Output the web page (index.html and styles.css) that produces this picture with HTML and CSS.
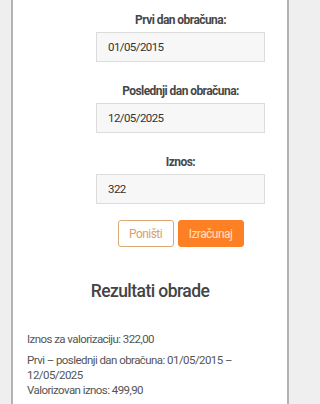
FILE: index.html
```html
<!DOCTYPE html>
<html lang="sr">
<head>
<meta charset="utf-8">
<meta name="viewport" content="width=300">
<link rel="stylesheet" href="styles.css">
</head>
<body>
<div class="card">
  <form class="form">
    <div class="group">
      <label class="label">Prvi dan obračuna:</label>
      <div class="input">01/05/2015</div>
    </div>
    <div class="group">
      <label class="label">Poslednji dan obračuna:</label>
      <div class="input">12/05/2025</div>
    </div>
    <div class="group">
      <label class="label">Iznos:</label>
      <div class="input">322</div>
    </div>
    <div class="actions">
      <button type="button" class="btn btn-outline">Poništi</button>
      <button type="button" class="btn btn-primary">Izračunaj</button>
    </div>
  </form>
  <h2 class="title">Rezultati obrade</h2>
  <div class="results">
    <p class="line">Iznos za valorizaciju: 322,00</p>
    <p class="line">Prvi – poslednji dan obračuna: 01/05/2015 – 12/05/2025</p>
    <p class="line tight">Valorizovan iznos: 499,90</p>
  </div>
</div>
</body>
</html>
```
FILE: styles.css
```css
html, body {
  margin: 0;
  padding: 0;
  background: #efefef;
  font-family: Roboto, "Liberation Sans", sans-serif;
  color: #444;
  height: 404px;
  overflow: hidden;
  letter-spacing: -0.035em;
}
body {
  width: 300px;
}
.card {
  margin-left: 11px;
  width: 278px;
  background: #fff;
  border-left: 2px solid #b3b3b3;
  border-right: 2px solid #b3b3b3;
  height: 404px;
  box-sizing: border-box;
  padding-top: 13px;
}
.form {
  margin: 0 22px 0 83px;
  display: flex;
  flex-direction: column;
  gap: 22px;
}
.group {
  display: flex;
  flex-direction: column;
  align-items: stretch;
}
.label {
  text-align: center;
  font-weight: 700;
  font-size: 12px;
  color: #474747;
  line-height: 14px;
  margin-bottom: 5px;
}
.input {
  height: 30px;
  box-sizing: border-box;
  background: #f7f7f7;
  border: 1px solid #dcdcdc;
  padding: 0 11px;
  display: flex;
  align-items: center;
  font-size: 11.5px;
  letter-spacing: -0.05em;
  color: #333;
}
.actions {
  display: flex;
  justify-content: center;
  gap: 4px;
  margin-top: -6px;
}
.btn {
  height: 27px;
  box-sizing: border-box;
  border-radius: 3px;
  font-family: inherit;
  letter-spacing: inherit;
  font-size: 12px;
  padding: 0;
}
.btn-outline {
  background: #fff;
  border: 1px solid #dcaa72;
  color: #dca065;
  width: 56px;
}
.btn-primary {
  background: #fd8124;
  border: 1px solid #fd8124;
  color: #ffe0c2;
  width: 66px;
}
.title {
  margin: 32px 0 0;
  text-align: center;
  font-size: 17.5px;
  font-weight: 500;
  color: #444;
  line-height: 24px;
}
.results {
  padding: 0 14px;
  margin-top: 29px;
  font-size: 11.5px;
  color: #555;
}
.line {
  margin: 0 0 6.5px;
  line-height: 14.5px;
}
.line.tight {
  margin-top: -5.5px;
}
```
